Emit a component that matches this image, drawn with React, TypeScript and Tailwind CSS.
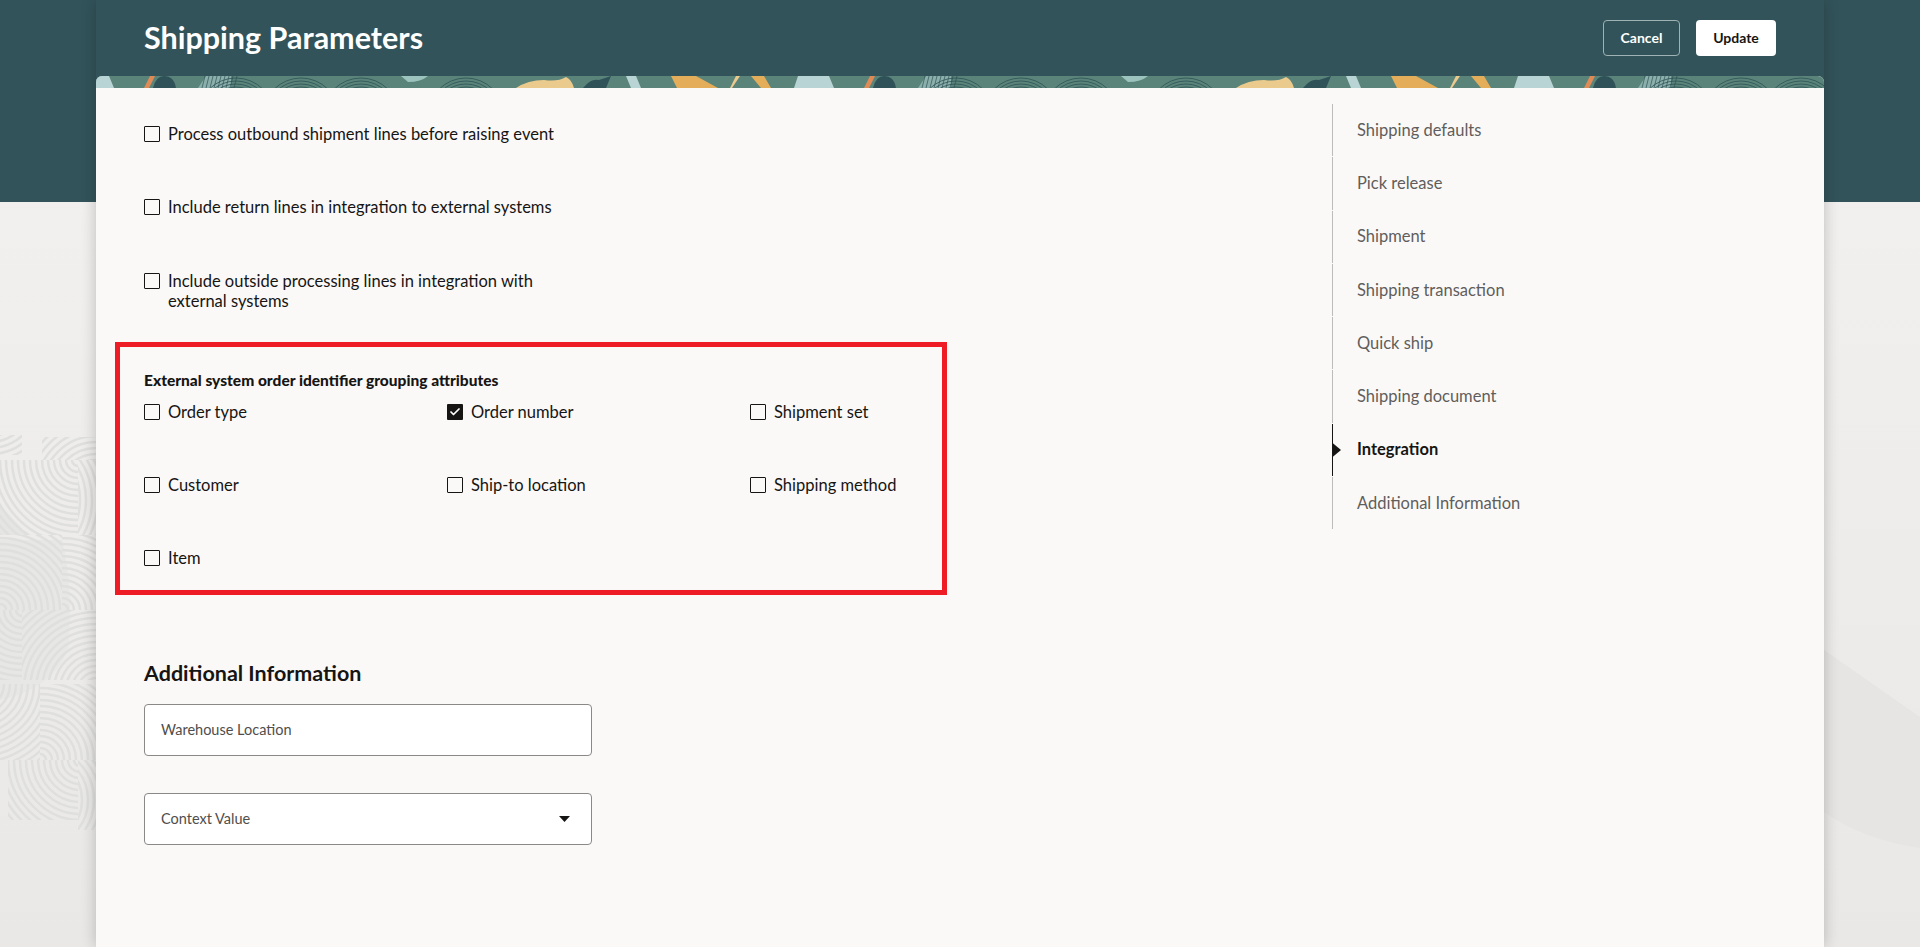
import { Check } from 'lucide-react';

const navItems = [
  'Shipping defaults',
  'Pick release',
  'Shipment',
  'Shipping transaction',
  'Quick ship',
  'Shipping document',
  'Integration',
  'Additional Information',
];

// clip box + arc centre for the faded ring blocks on the left of the page
const ringBlocks = [
  { x: 0, y: 435, w: 22, h: 20, cx: -10, cy: 400 },
  { x: 42, y: 437, w: 54, h: 23, cx: 96, cy: 490 },
  { x: 0, y: 460, w: 78, h: 75, cx: 78, cy: 460 },
  { x: 78, y: 460, w: 18, h: 75, cx: 20, cy: 500 },
  { x: 0, y: 535, w: 62, h: 75, cx: 0, cy: 610 },
  { x: 62, y: 535, w: 34, h: 75, cx: 62, cy: 610 },
  { x: 0, y: 610, w: 22, h: 70, cx: 22, cy: 610 },
  { x: 22, y: 610, w: 74, h: 70, cx: 96, cy: 690 },
  { x: 0, y: 684, w: 40, h: 76, cx: -20, cy: 684 },
  { x: 40, y: 684, w: 56, h: 76, cx: 40, cy: 760 },
  { x: 8, y: 760, w: 70, h: 60, cx: 80, cy: 760 },
  { x: 78, y: 760, w: 18, h: 70, cx: 40, cy: 800 },
];

const radii = Array.from({ length: 22 }, (_, i) => 6 + i * 6);

function SideRings() {
  return (
    <svg className="absolute left-0 top-0" width="96" height="947" fill="none">
      <defs>
        {ringBlocks.map((b, i) => (
          <clipPath key={i} id={`ring-${i}`}>
            <rect x={b.x} y={b.y} width={b.w} height={b.h} />
          </clipPath>
        ))}
      </defs>
      <path d="M0 505 L28 535 L0 535 Z" fill="#e5e5e3" />
      <path d="M0 540 H62 Q74 590 68 650 Q50 690 0 700 Z" fill="#e7e7e5" />
      {ringBlocks.map((b, i) => (
        <g key={i} clipPath={`url(#ring-${i})`} stroke="#dfdfdd" strokeWidth="2.5">
          {radii.map((r) => (
            <circle key={r} cx={b.cx} cy={b.cy} r={r} />
          ))}
        </g>
      ))}
    </svg>
  );
}

function StripTile({ x }: { x: number }) {
  const arcs = [20, 23, 26, 29, 32, 35, 38];
  const hatch = [106, 110, 114, 118, 122, 126, 130, 134, 138];
  return (
    <g transform={`translate(${x} 0)`}>
      <path d="M-20 12 L-16 0 H13 L18 12 Z" fill="#b9d4d4" />
      <path d="M54 0 H59 L53 12 H48 Z" fill="#e08a55" />
      <path d="M57 12 Q60 0 68 0 Q78 0 80 12 Z" fill="#2f5258" />
      <path d="M102 12 L110 0 H135 V12 Z" fill="#8bb0ab" />
      <path d="M305 0 H332 Q325 6 312 6 Z" fill="#9dc3bf" />
      {hatch.map((hx) => (
        <path key={hx} d={`M${hx + 3} 0 L${hx} 12`} stroke="#2f5258" strokeWidth="0.7" />
      ))}
      {[140, 205, 265, 370].map((cx) => (
        <g key={cx} stroke="#2f5258" strokeWidth="0.8" fill="none">
          {arcs.map((r) => (
            <circle key={r} cx={cx} cy={40} r={r} />
          ))}
        </g>
      ))}
      <path d="M420 12 Q432 4 448 4 Q462 6 470 1 Q476 4 478 12 Z" fill="#ebca8e" />
      <path d="M487 12 Q495 2 503 4 L515 0 L510 12 Z" fill="#2f5258" />
      <path d="M530 0 H540 L545 12 H535 Z" fill="#b9d4d4" />
      <path d="M575 0 H600 L622 12 H581 Z" fill="#e4ad5a" />
      <path d="M640 0 H644 L636 12 H634 Z" fill="#ebca8e" />
      <path d="M655 0 H668 L675 12 H665 Z" fill="#e4ad5a" />
      <path d="M698 12 L702 0 H720 V12 Z" fill="#b9d4d4" />
    </g>
  );
}

function CheckRow({ label, checked = false }: { label: string; checked?: boolean }) {
  return (
    <label className="flex items-start gap-2 text-[16.5px] leading-[20px] text-[#161513]">
      <span
        className={
          checked
            ? 'mt-[2px] flex h-4 w-4 shrink-0 items-center justify-center rounded-[1px] bg-[#161513] text-white'
            : 'mt-[2px] h-4 w-4 shrink-0 rounded-[1px] border-[1.5px] border-[#161513]'
        }
      >
        {checked && <Check size={12} strokeWidth={3.5} />}
      </span>
      <span>{label}</span>
    </label>
  );
}

export default function App() {
  return (
    <div
      className="relative h-[947px] w-full overflow-hidden bg-linear-to-b from-[#f3f2f0] to-[#e9e8e6]"
      style={{ fontFamily: 'Lato, "Noto Sans", Arial, sans-serif' }}
    >
      <div className="absolute inset-x-0 top-0 h-[202px] bg-[#32535a]" />
      <SideRings />
      <svg className="absolute right-0 top-0" width="96" height="947">
        <path d="M0 650 L96 717 V848 Q40 840 0 812 Z" fill="#e6e5e3" />
      </svg>

      <div className="relative mx-[96px] flex h-full flex-col shadow-[0_0_14px_rgba(0,0,0,0.22)]">
        {/* Page title bar */}
        <header className="flex h-[76px] shrink-0 items-center justify-between pl-[48px] pr-[48px]">
          <h1 className="pb-[2px] text-[30.5px] font-bold leading-none text-white">Shipping Parameters</h1>
          <div className="flex items-center gap-4">
            <button className="h-9 w-[77px] rounded-[4px] border border-[#9fb3b5] pb-[2px] text-[14px] font-bold text-white">
              Cancel
            </button>
            <button className="h-9 w-20 rounded-[4px] bg-white pb-[2px] text-[14px] font-bold text-[#161513]">
              Update
            </button>
          </div>
        </header>

        <div className="flex min-h-0 flex-1 flex-col overflow-hidden rounded-t-[6px] bg-[#fbf9f8]">
          <svg className="h-3 w-full shrink-0 bg-[#5a8479]" viewBox="0 0 1728 12" preserveAspectRatio="none">
            <StripTile x={0} />
            <StripTile x={720} />
            <StripTile x={1440} />
          </svg>

          <div className="flex flex-1">
            <div className="flex-1 pl-[48px] pt-9">
              <div className="w-[447px]">
                <CheckRow label="Process outbound shipment lines before raising event" />
                <div className="mt-[53px]">
                  <CheckRow label="Include return lines in integration to external systems" />
                </div>
                <div className="mt-[54px]">
                  <CheckRow label="Include outside processing lines in integration with external systems" />
                </div>
              </div>

              {/* Red call-out round the grouping attributes */}
              <div className="-ml-[29px] mt-[31px] h-[253px] w-[832px] border-[5px] border-[#ee1c25] pl-6 pt-[23px]">
                <h3 className="text-[15.5px] font-black leading-[20px] text-[#161513]">
                  External system order identifier grouping attributes
                </h3>
                <div className="mt-[12px] grid grid-cols-[303px_303px_1fr] gap-y-[53px]">
                  <CheckRow label="Order type" />
                  <CheckRow label="Order number" checked />
                  <CheckRow label="Shipment set" />
                  <CheckRow label="Customer" />
                  <CheckRow label="Ship-to location" />
                  <CheckRow label="Shipping method" />
                  <CheckRow label="Item" />
                </div>
              </div>

              <h2 className="mt-[63px] text-[21.5px] font-bold leading-[30px] text-[#161513]">Additional Information</h2>
              <div className="mt-4 flex h-[52px] w-[448px] items-center rounded-[4px] border border-[#8a8988] bg-white px-4 text-[14.5px] text-[#4f4e4c]">
                Warehouse Location
              </div>
              <div className="mt-[37px] flex h-[52px] w-[448px] items-center justify-between rounded-[4px] border border-[#8a8988] bg-white pl-4 pr-[21px] text-[14.5px] text-[#4f4e4c]">
                Context Value
                <svg width="11" height="6" viewBox="0 0 11 6">
                  <path d="M0 0 H11 L5.5 6 Z" fill="#161513" />
                </svg>
              </div>
            </div>

            <nav className="flex h-[441px] w-[492px] shrink-0 flex-col gap-px pt-4">
              {navItems.map((item) => {
                const active = item === 'Integration';
                return (
                  <div
                    key={item}
                    className={
                      active
                        ? 'relative flex flex-1 items-center border-l border-[#161513] pl-6 text-[16.5px] font-bold text-[#161513]'
                        : 'flex flex-1 items-center border-l border-[#bdbcba] pl-6 text-[16.5px] text-[#5f5e5c]'
                    }
                  >
                    {active && (
                      <svg className="absolute -left-px top-1/2 -translate-y-1/2" width="9" height="15" viewBox="0 0 9 15">
                        <path d="M0 0 L9 7.5 L0 15 Z" fill="#161513" />
                      </svg>
                    )}
                    {item}
                  </div>
                );
              })}
            </nav>
          </div>
        </div>
      </div>
    </div>
  );
}
